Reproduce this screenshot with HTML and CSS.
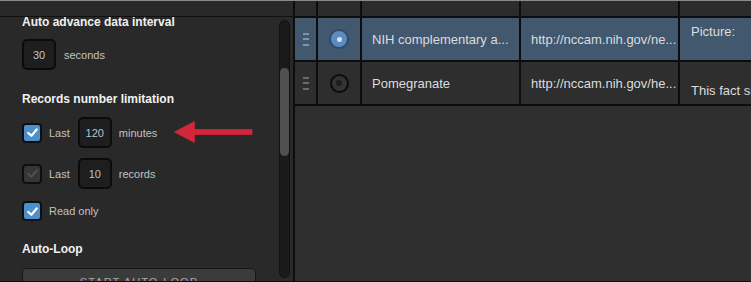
FILE: index.html
```html
<!DOCTYPE html>
<html lang="en">
<head>
        <meta charset="UTF-8">
        <title>Data Source Settings</title>
        <link rel="stylesheet" href="styles.css">
</head>
<body>
        <div class="app">
                <div class="settings">
                        <div class="settings-top"></div>
                        <div class="settings-body">
                                <div class="settings-scroll">
                                        <div class="settings-content">
                                                <h3 class="section-title">Auto advance data interval</h3>
                                                <div class="option-row first-row">
                                                        <span class="num-box">30</span>
                                                        <span class="label">seconds</span>
                                                </div>

                                                <h3 class="section-title records-title">Records number limitation</h3>
                                                <div class="option-row limit-row">
                                                        <span class="check checked"><svg viewBox="0 0 16 16"><path d="M3.5 8.5 L6.8 11.5 L12.5 4.8"/></svg></span>
                                                        <span class="label last">Last</span>
                                                        <span class="num-box">120</span>
                                                        <span class="label">minutes</span>
                                                        <svg class="arrow" viewBox="0 0 82 24"><polygon points="0,11.5 22,0 22,23"/><rect x="21" y="8.5" width="61" height="6"/></svg>
                                                </div>
                                                <div class="option-row limit-row">
                                                        <span class="check disabled"><svg viewBox="0 0 16 16"><path d="M3.5 8.5 L6.8 11.5 L12.5 4.8"/></svg></span>
                                                        <span class="label last">Last</span>
                                                        <span class="num-box">10</span>
                                                        <span class="label">records</span>
                                                </div>
                                                <div class="option-row readonly-row">
                                                        <span class="check checked"><svg viewBox="0 0 16 16"><path d="M3.5 8.5 L6.8 11.5 L12.5 4.8"/></svg></span>
                                                        <span class="label">Read only</span>
                                                </div>

                                                <h3 class="section-title loop-title">Auto-Loop</h3>
                                                <div class="loop-button">START AUTO-LOOP</div>
                                        </div>
                                </div>
                                <div class="scrollbar"><div class="scroll-thumb"></div></div>
                        </div>
                </div>

                <div class="records">
                        <div class="grid">
                                <div class="cell head"></div>
                                <div class="cell head"></div>
                                <div class="cell head"></div>
                                <div class="cell head"></div>
                                <div class="cell head"></div>

                                <div class="cell grip selected"><span></span><span></span><span></span></div>
                                <div class="cell pick selected"><span class="radio on"></span></div>
                                <div class="cell text selected">NIH complementary a...</div>
                                <div class="cell text selected">http://nccam.nih.gov/ne...</div>
                                <div class="cell note selected">Picture:</div>

                                <div class="cell grip"><span></span><span></span><span></span></div>
                                <div class="cell pick"><span class="radio"></span></div>
                                <div class="cell text">Pomegranate</div>
                                <div class="cell text">http://nccam.nih.gov/he...</div>
                                <div class="cell note"><br>This fact sheet provides basic information</div>
                        </div>
                </div>
        </div>
</body>
</html>
```

FILE: styles.css
```css
* {
        margin: 0;
        padding: 0;
        box-sizing: border-box;
}

body {
        width: 751px;
        height: 282px;
        overflow: hidden;
        background-color: #2e2e2e;
        font-family: "Liberation Sans", Arial, sans-serif;
}

.app {
        display: flex;
        flex-direction: row;
        height: 282px;
        border-top: 1px solid #8a8a8a;
        border-bottom: 1px solid #0e0e0e;
}

/* left settings panel */
.settings {
        width: 295px;
        display: flex;
        flex-direction: column;
        background-color: #292929;
        border-right: 2px solid #0d0d0d;
}

.settings-top {
        height: 16px;
        border-bottom: 1px solid #101010;
}

.settings-body {
        flex: 1;
        display: flex;
        flex-direction: row;
        min-height: 0;
}

.settings-scroll {
        flex: 1;
        overflow: hidden;
}

.settings-content {
        margin-top: -2px;
        padding-left: 22px;
}

.section-title {
        font-size: 12px;
        line-height: 14px;
        font-weight: bold;
        color: #f1f1f1;
}

.records-title {
        margin-top: 22px;
}

.loop-title {
        margin-top: 21px;
}

.option-row {
        display: flex;
        flex-direction: row;
        align-items: center;
        gap: 8px;
        height: 31px;
}

.first-row {
        margin-top: 10px;
}

.limit-row {
        gap: 7px;
        margin-top: 11px;
        position: relative;
}

.limit-row + .limit-row {
        margin-top: 10px;
}

.readonly-row {
        height: 20px;
        gap: 7px;
        margin-top: 12px;
}

.label {
        font-size: 11px;
        color: #c2c2c2;
}

.label.last {
        margin-right: 1px;
}

.num-box {
        width: 34px;
        height: 31px;
        display: flex;
        align-items: center;
        justify-content: center;
        background-color: #1e1e1e;
        border: 2px solid #0b0b0b;
        border-radius: 5px;
        font-size: 11px;
        color: #bcc3ca;
}

.check {
        width: 20px;
        height: 20px;
        display: flex;
        align-items: center;
        justify-content: center;
        border: 2px solid #0e0e0e;
        border-radius: 4px;
}

.check svg {
        width: 15px;
        height: 15px;
        fill: none;
        stroke-width: 2.4;
        stroke-linecap: round;
        stroke-linejoin: round;
}

.check.checked {
        background-color: #4c8fcd;
}

.check.checked svg {
        stroke: #ffffff;
}

.check.disabled {
        background-color: #363636;
}

.check.disabled svg {
        stroke: #4f4f4f;
}

/* annotation arrow pointing at the minutes field */
.arrow {
        position: absolute;
        left: 150px;
        top: 4px;
        width: 82px;
        height: 23px;
        fill: #d3263a;
}

.loop-button {
        margin-top: 12px;
        width: 234px;
        height: 28px;
        display: flex;
        align-items: center;
        justify-content: center;
        background-color: #3b3b3b;
        border: 1px solid #161616;
        border-radius: 4px;
        font-size: 11px;
        letter-spacing: 1.1px;
        color: #a9a9a9;
}

.scrollbar {
        width: 11px;
        margin: 3px 3px 3px 0;
        background-color: #1a1a1a;
        border: 1px solid #111;
        border-radius: 6px;
        padding-top: 47px;
}

.scroll-thumb {
        height: 88px;
        background-color: #505050;
        border-radius: 5px;
}

/* records table */
.records {
        flex: 1;
        overflow: hidden;
        background-color: #2f2f2f;
}

.grid {
        display: grid;
        grid-template-columns: 21px 42px 157px 157px 1fr;
        grid-template-rows: 15px 42px 42px;
        gap: 2px;
        padding-bottom: 2px;
        background-color: #0d0d0d;
}

.cell {
        background-color: #2e2e2e;
        color: #dcdcdc;
        font-size: 13px;
        white-space: nowrap;
        overflow: hidden;
}

.cell.head {
        background-color: #2c2c2c;
}

.cell.selected {
        background-color: #41586e;
}

.grip {
        display: flex;
        flex-direction: column;
        align-items: center;
        justify-content: center;
        gap: 3.5px;
}

.grip span {
        width: 6px;
        height: 2px;
        background-color: #6b6b6b;
}

.grip.selected span {
        background-color: #7f95aa;
}

.pick {
        display: flex;
        align-items: center;
        justify-content: center;
}

.radio {
        width: 19px;
        height: 19px;
        border-radius: 50%;
        border: 2px solid #0b0b0b;
        background-color: #333;
        display: flex;
        align-items: center;
        justify-content: center;
}

.radio::after {
        content: "";
        width: 6px;
        height: 6px;
        border-radius: 50%;
        background-color: #1d1d1d;
}

.radio.on {
        width: 20px;
        height: 20px;
        border-color: #2f4d6a;
        background-color: #5a8cc0;
}

.radio.on::after {
        width: 5px;
        height: 5px;
        background-color: #dde3e8;
}

.text {
        display: flex;
        align-items: center;
        padding-left: 10px;
}

.note {
        padding: 6px 0 0 11px;
        line-height: 15px;
}
```
